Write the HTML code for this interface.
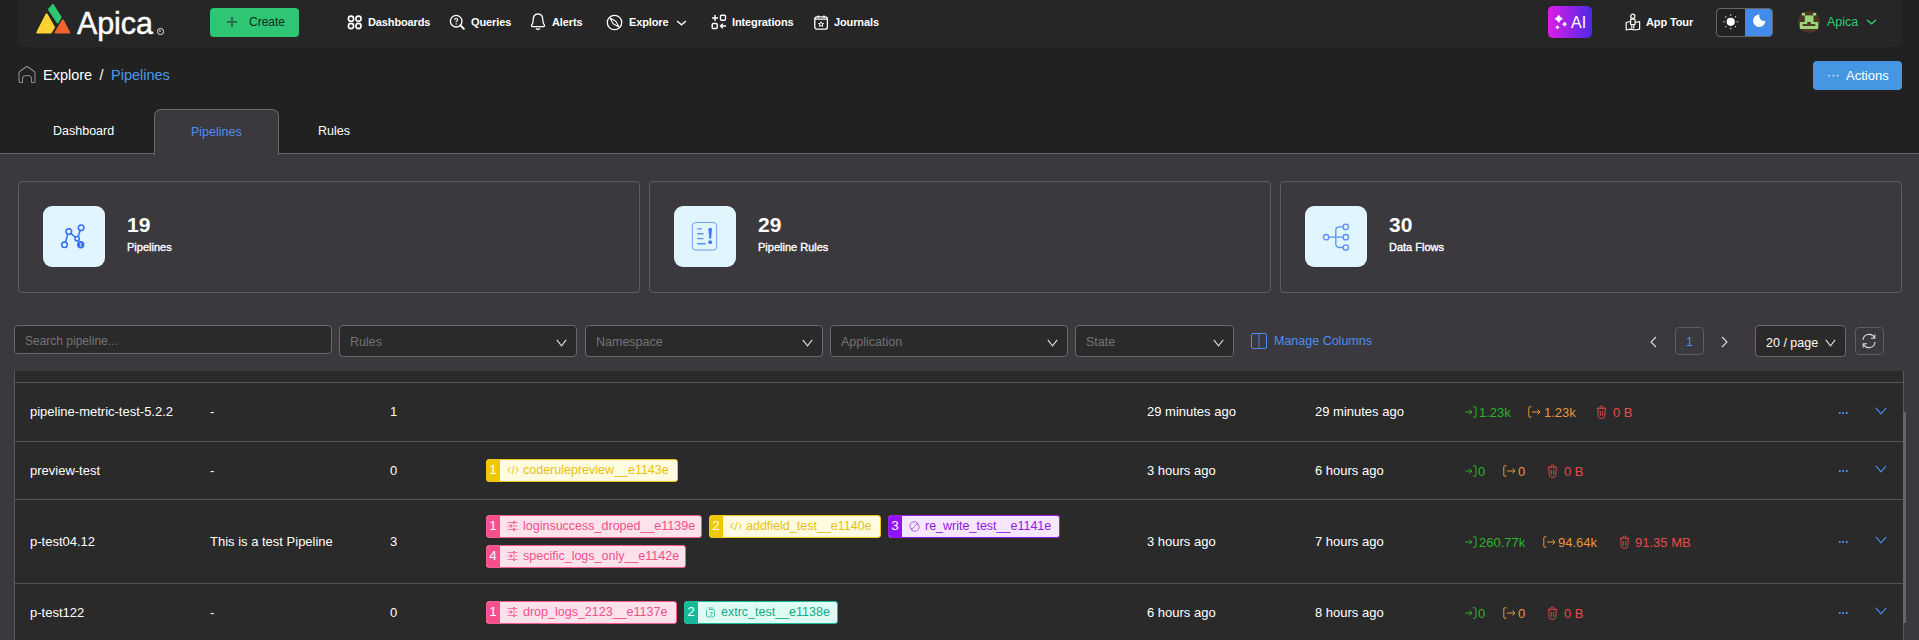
<!DOCTYPE html>
<html><head><meta charset="utf-8">
<style>
*{box-sizing:border-box;margin:0;padding:0}
html,body{width:1919px;height:640px;overflow:hidden;background:#212121;font-family:"Liberation Sans",sans-serif;color:#fff}
.a{position:absolute;white-space:nowrap}
.nav{position:absolute;left:18px;top:0;width:1884px;height:47px;background:#262626;border-radius:0 0 8px 8px}
.nt{position:absolute;top:17px;font-size:11px;font-weight:bold;line-height:11px;color:#fff;letter-spacing:-0.12px}
.content{position:absolute;left:0;top:153px;width:1919px;height:487px;background:#3b393e;border-top:1px solid #666}
.card{position:absolute;top:181px;height:112px;width:622px;border:1px solid #5e5c61;border-radius:4px;background:#3b393e}
.ibox{position:absolute;left:24px;top:24px;width:62px;height:61px;background:#e0f5fe;border-radius:9px}
.cnum{position:absolute;left:108px;top:213.5px;font-size:21px;font-weight:bold;line-height:21px}
.clab{position:absolute;left:108px;top:241.7px;font-size:11px;font-weight:normal;line-height:11px;-webkit-text-stroke:0.35px #fff}
.sel{position:absolute;top:325px;height:32px;border:1px solid #6a686d;border-radius:4px;background:#2a2a2a}
.ph{position:absolute;left:10px;top:9.5px;font-size:12.5px;line-height:13px;color:#737377}
.chev{position:absolute;right:9px;top:12.5px}
.table{position:absolute;left:14px;top:371px;width:1890px;height:269px;background:#2a2a2a;border-left:1px solid #5a5a5a;border-right:1px solid #5a5a5a}
.hl{position:absolute;left:15px;width:1888px;height:1px;background:#555}
.td{position:absolute;font-size:13px;line-height:13px;color:#fff}
.tag{position:absolute;height:23px;border:1px solid;border-radius:3px;overflow:hidden}
.tag .n{position:absolute;left:-1px;top:-1px;bottom:-1px;width:14px;color:#fff;font-size:13.5px;line-height:21.5px;text-align:center}
.tag .t{position:absolute;left:36px;top:4.3px;font-size:12.5px;line-height:13px}
.tag svg{position:absolute;left:20px;top:6px;opacity:0.75}
.pink{background:#fde1eb;border-color:#f55b92}
.pink .n{background:#f74f8c}
.pink .t{color:#f0508a}
.yel{background:#fffbe1;border-color:#f1c40f}
.yel .n{background:#f0c800}
.yel .t{color:#e6c20e}
.pur{background:#f6e6fe;border-color:#9b1fe8}
.pur .n{background:#9013fe}
.pur .t{color:#8e1be0}
.teal{background:#dffcf4;border-color:#1abc9c}
.teal .n{background:#17b897}
.teal .t{color:#13a889}
.m{position:absolute;font-size:13px;line-height:13px;margin-top:0.5px}
.g{color:#2bb52b}.o{color:#e8973c}.r{color:#e84a4a}
</style></head><body>

<!-- NAV -->
<div class="nav"></div>
<svg class="a" style="left:35px;top:3px" width="37" height="32" viewBox="0 0 37 32" stroke-linejoin="round" stroke-width="2">
  <path d="M18 2 L25.6 14.3 L22.6 19.5 L14 6.5 Z" fill="#2dc772" stroke="#2dc772"/>
  <path d="M11.6 11.3 L19 24.3 L15.6 29.6 L2.2 29.6 Z" fill="#fdd034" stroke="#fdd034"/>
  <path d="M27.8 17.3 L34.2 29.6 L20.6 29.6 Z" fill="#f0642c" stroke="#f0642c"/>
</svg>
<div class="a" style="left:77px;top:8px;font-size:30.5px;line-height:30px;color:#fff;letter-spacing:-0.1px;-webkit-text-stroke:0.45px #fff">Apica</div>
<div class="a" style="left:157px;top:28px;width:6.5px;height:6.5px;border:1.3px solid #e8e8e8;border-radius:50%"></div><div class="a" style="left:159.2px;top:30.2px;width:2.2px;height:2.2px;background:#bbb;border-radius:50%"></div>

<div class="a" style="left:210px;top:8px;width:89px;height:29px;background:#2ec574;border-radius:4px"></div>
<div class="a" style="left:227px;top:21.2px;width:10px;height:1.5px;background:#2a6e47"></div>
<div class="a" style="left:231.3px;top:17px;width:1.5px;height:10px;background:#2a6e47"></div>
<div class="a" style="left:249px;top:16px;font-size:12px;line-height:12px;color:#16281f">Create</div>

<svg class="a" style="left:347px;top:15px" width="16" height="15" viewBox="0 0 16 15" fill="none" stroke="#fff" stroke-width="1.6">
  <circle cx="4" cy="3.7" r="2.6"/><circle cx="11.5" cy="3.7" r="2.6"/><circle cx="4" cy="11" r="2.6"/><circle cx="11.5" cy="11" r="2.6"/>
</svg>
<div class="nt" style="left:368px">Dashboards</div>

<svg class="a" style="left:449px;top:14px" width="17" height="17" viewBox="0 0 17 17" fill="none" stroke="#fff" stroke-width="1.3"><circle cx="7.2" cy="7.2" r="5.8"/><path d="M11.4 11.4 L14.8 14.8" stroke-width="2" stroke-linecap="round"/><path d="M5.7 5.9 Q5.7 4.3 7.2 4.3 Q8.7 4.3 8.7 5.7 Q8.7 6.7 7.2 7.2 L7.2 8.2" stroke-width="1.1"/><circle cx="7.2" cy="9.9" r="0.7" fill="#fff" stroke="none"/></svg>
<div class="nt" style="left:471px">Queries</div>

<svg class="a" style="left:530px;top:13px" width="16" height="18" viewBox="0 0 16 18" fill="none" stroke="#fff" stroke-width="1.3"><path d="M3 13.7 Q1.2 13.7 1.6 12 Q3.2 10.2 3.2 7 Q3.2 1 8 1 Q12.8 1 12.8 7 Q12.8 10.2 14.4 12 Q14.8 13.7 13 13.7 Z" stroke-linejoin="round"/><path d="M6 15.6 Q8 17.2 10 15.6"/></svg>
<div class="nt" style="left:552px">Alerts</div>

<svg class="a" style="left:606px;top:13.5px" width="17" height="17" viewBox="0 0 17 17" fill="none" stroke="#fff" stroke-width="1.3"><circle cx="8.5" cy="8.5" r="7.2"/><path d="M4 4 L9.8 7.2 L13 13 L7.2 9.8 Z" stroke-width="1.1" stroke-linejoin="round"/></svg>
<div class="nt" style="left:629px">Explore</div>
<svg class="a" style="left:676px;top:19.5px" width="11" height="6" viewBox="0 0 11 6" fill="none" stroke="#fff" stroke-width="1.4"><path d="M1 1 L5.5 4.8 L10 1"/></svg>

<svg class="a" style="left:711px;top:14px" width="16" height="16" viewBox="0 0 16 16" fill="none" stroke="#fff" stroke-width="1.4">
  <path d="M4 1 L4 7 M1 4 L7 4"/><rect x="9.5" y="1.2" width="5" height="5" rx="1"/><rect x="1.2" y="9.5" width="5" height="5" rx="1"/><path d="M15 12 L9.5 12 M11.8 9.7 L9.5 12 L11.8 14.3"/>
</svg>
<div class="nt" style="left:732px">Integrations</div>

<svg class="a" style="left:814px;top:15px" width="15" height="15" viewBox="0 0 15 15" fill="none" stroke="#fff" stroke-width="1.3"><rect x="0.8" y="1.8" width="12.6" height="12.4" rx="2.2"/><path d="M4.2 0.5 L4.2 3 M10 0.5 L10 3 M0.8 4.2 L13.4 4.2"/><path d="M7.1 6.8 L7.9 8.4 L9.6 8.6 L8.3 9.7 L8.7 11.4 L7.1 10.5 L5.5 11.4 L5.9 9.7 L4.6 8.6 L6.3 8.4 Z" stroke-width="1"/></svg>
<div class="nt" style="left:834px">Journals</div>

<!-- right nav -->
<div class="a" style="left:1548px;top:6px;width:44px;height:31.5px;border-radius:5px;background:linear-gradient(90deg,#e01de6,#4b2ae6)"></div>
<svg class="a" style="left:1553px;top:12px" width="14" height="18" viewBox="0 0 14 18" fill="#fff"><path d="M5.75 2.45 Q6.954 5.546 10.05 6.75 Q6.954 7.954 5.75 11.05 Q4.546 7.954 1.4500000000000002 6.75 Q4.546 5.546 5.75 2.45 Z"/><path d="M11.6 9.6 Q12.328 11.472 14.2 12.2 Q12.328 12.927999999999999 11.6 14.799999999999999 Q10.872 12.927999999999999 9.0 12.2 Q10.872 11.472 11.6 9.6 Z"/><path d="M4.5 12.899999999999999 Q5.144 14.556 6.8 15.2 Q5.144 15.844 4.5 17.5 Q3.856 15.844 2.2 15.2 Q3.856 14.556 4.5 12.899999999999999 Z"/></svg>
<div class="a" style="left:1571px;top:14.5px;font-size:16px;line-height:16px;color:#fff">AI</div>

<svg class="a" style="left:1625px;top:13px" width="16" height="18" viewBox="0 0 16 18" fill="none" stroke="#fff" stroke-width="1.2" stroke-linejoin="round"><circle cx="7.8" cy="3.3" r="2.1"/><path d="M5.6 6.2 L10 6.2 L10 11.5 L5.6 11.5 Z"/><path d="M6.8 11.5 L6.8 15.5 M8.8 11.5 L8.8 15.5"/><path d="M5 8.5 L1.2 9.5 L1.2 17 L5.2 16.2 L10.4 17 L14.6 16.2 L14.6 8.5 L10.6 9.3"/></svg>
<div class="nt" style="left:1646px">App Tour</div>

<div class="a" style="left:1716px;top:8px;width:57px;height:29px;border:1px solid #666;border-radius:4px;background:#222;overflow:hidden">
  <div class="a" style="left:28px;top:0;width:28px;height:27px;background:#438aea"></div>
</div>
<svg class="a" style="left:1722px;top:13px" width="18" height="18" viewBox="0 0 18 18" fill="#fff" stroke="#fff"><circle cx="8.7" cy="8.8" r="4.1" stroke="none"/><g stroke-width="1.1" stroke-linecap="butt" opacity="0.85"><path d="M8.7 1.3 L8.7 2.8 M8.7 14.8 L8.7 16.3 M1.2 8.8 L2.7 8.8 M14.7 8.8 L16.2 8.8 M3.4 3.5 L4.3 4.4 M13.1 13.2 L14 14.1 M3.4 14.1 L4.3 13.2 M13.1 4.4 L14 3.5"/></g></svg>
<svg class="a" style="left:1752px;top:14px" width="15" height="14" viewBox="0 0 15 14"><path d="M7.50 0.61 A6.2 6.2 0 1 0 13.40 6.88 A5.0 5.0 0 0 1 7.50 0.61 Z" fill="#fff"/></svg>


<svg class="a" style="left:1798px;top:11px" width="22" height="22" viewBox="0 0 22 22"><circle cx="11" cy="11" r="11" fill="#4a3526"/><g fill="#9dd67a"><rect x="3.8" y="1.9" width="3.2" height="2.6"/><rect x="15" y="1.9" width="3.2" height="2.6"/><rect x="6.8" y="4.4" width="8.7" height="6.8"/><rect x="1.8" y="11" width="18.4" height="7"/></g><rect x="4.6" y="13.1" width="12.8" height="1.9" fill="#4a3526"/><rect x="9.2" y="11" width="3.6" height="2.1" fill="#4a3526"/></svg>
<div class="a" style="left:1827px;top:16px;font-size:12.5px;line-height:13px;color:#2ecc71">Apica</div>
<svg class="a" style="left:1866px;top:19px" width="11" height="6" viewBox="0 0 11 6" fill="none" stroke="#2ecc71" stroke-width="1.4"><path d="M1 1 L5.5 4.8 L10 1"/></svg>

<!-- breadcrumb -->
<svg class="a" style="left:18px;top:66px" width="18" height="18" viewBox="0 0 18 18" fill="none" stroke="#8a8a8a" stroke-width="1.1">
  <path d="M4.5 16.5 L2 16.5 Q1 16.5 1 15.5 L1 7 Q1 6 2 5.3 L8 1 Q9 0.3 10 1 L16 5.3 Q17 6 17 7 L17 15.5 Q17 16.5 16 16.5 L13.5 16.5 L13.5 12.5 Q13.5 9.5 9 9.5 Q4.5 9.5 4.5 12.5 Z" stroke-linejoin="round"/>
</svg>
<div class="a" style="left:43px;top:67.5px;font-size:14.5px;line-height:15px;color:#fff">Explore</div>
<div class="a" style="left:99.5px;top:67.5px;font-size:14.5px;line-height:15px;color:#fff">/</div>
<div class="a" style="left:111px;top:67.5px;font-size:14.5px;line-height:15px;color:#4a9ae8">Pipelines</div>

<div class="a" style="left:1813px;top:61px;width:89px;height:29px;background:#4597e3;border-radius:4px"></div>
<div class="a" style="left:1827px;top:69px;font-size:12px;line-height:12px;color:#fff;letter-spacing:0.2px">···</div>
<div class="a" style="left:1846px;top:69px;font-size:13px;line-height:13px;color:#fff">Actions</div>

<!-- tabs -->
<div class="a" style="left:53px;top:124.6px;font-size:12.5px;line-height:13px;color:#fff">Dashboard</div>
<div class="a" style="left:318px;top:124.6px;font-size:12.5px;line-height:13px;color:#fff">Rules</div>

<!-- content -->
<div class="content"></div>
<div class="a" style="left:154px;top:109px;width:125px;height:46px;background:#3b393e;border:1px solid #6b696e;border-bottom:none;border-radius:7px 7px 0 0"></div>
<div class="a" style="left:191px;top:126px;font-size:12.5px;line-height:13px;color:#4a8ff0">Pipelines</div>

<!-- cards -->
<div class="card" style="left:18px"><div class="ibox"></div></div>
<div class="card" style="left:649px"><div class="ibox"></div></div>
<div class="card" style="left:1280px"><div class="ibox"></div></div>

<svg class="a" style="left:60px;top:223px" width="28" height="28" viewBox="0 0 28 28" fill="none" stroke="#2f6ef5" stroke-width="1.5">
  <circle cx="21.1" cy="4.8" r="2.8"/><circle cx="8.8" cy="8.5" r="2.8"/><circle cx="17.1" cy="15.8" r="2.2"/><circle cx="4.5" cy="21.8" r="2.8"/>
  <path d="M5.5 19.2 L7.8 11.1 M10.8 10.4 L15.4 14.3 M20.2 7.5 L18.1 13.6"/>
  <circle cx="20.7" cy="21.8" r="3.7" fill="#2f6ef5" stroke="none"/><path d="M21.8 20.6 L19.8 20.6 L21.2 21.8 L19.8 23 L21.8 23" stroke="#e0f5fe" stroke-width="0.7"/>
</svg>
<div class="cnum" style="left:127px">19</div>
<div class="clab" style="left:127px">Pipelines</div>

<svg class="a" style="left:691px;top:222px" width="28" height="30" viewBox="0 0 28 30" fill="none">
  <rect x="1.3" y="0.5" width="24.4" height="27.6" rx="3.5" stroke="#6d9df7" stroke-width="1"/>
  <path d="M6.2 6.9 L10.8 6.9 M6.2 11.8 L12.6 11.8 M6.2 16.6 L12.6 16.6 M6.2 21.7 L14.6 21.7" stroke="#5c8ff6" stroke-width="1.4"/>
  <path d="M17.4 7.3 Q17.4 5.8 19.2 5.8 Q21 5.8 21 7.3 L20.1 16.8 L18.3 16.8 Z" fill="#3f7cf5"/>
  <circle cx="19.2" cy="20.2" r="1.9" fill="#3f7cf5"/>
</svg>
<div class="cnum" style="left:758px">29</div>
<div class="clab" style="left:758px">Pipeline Rules</div>

<svg class="a" style="left:1322px;top:223px" width="28" height="28" viewBox="0 0 28 28" fill="none" stroke="#5a8ef5" stroke-width="1.3">
  <circle cx="4.1" cy="14.2" r="2.7"/><circle cx="23.8" cy="3.9" r="2.7"/><circle cx="23.8" cy="14.2" r="2.7"/><circle cx="23.8" cy="24.5" r="2.7"/>
  <path d="M6.8 14.2 L21.1 14.2 M21.1 3.9 L17.5 3.9 Q13.8 3.9 13.8 7.6 L13.8 20.8 Q13.8 24.5 17.5 24.5 L21.1 24.5"/>
</svg>
<div class="cnum" style="left:1389px">30</div>
<div class="clab" style="left:1389px">Data Flows</div>

<!-- filters -->
<div class="sel" style="left:14px;width:318px;height:29px"><div class="ph" style="top:8.5px;font-size:12px">Search pipeline...</div></div>
<div class="sel" style="left:339px;width:238px"><div class="ph">Rules</div><svg class="chev" width="11" height="8" viewBox="0 0 11 8" fill="none" stroke="#e0e0e0" stroke-width="1.1"><path d="M0.8 0.8 L5.5 6.8 L10.2 0.8"/></svg></div>
<div class="sel" style="left:585px;width:238px"><div class="ph">Namespace</div><svg class="chev" width="11" height="8" viewBox="0 0 11 8" fill="none" stroke="#e0e0e0" stroke-width="1.1"><path d="M0.8 0.8 L5.5 6.8 L10.2 0.8"/></svg></div>
<div class="sel" style="left:830px;width:238px"><div class="ph">Application</div><svg class="chev" width="11" height="8" viewBox="0 0 11 8" fill="none" stroke="#e0e0e0" stroke-width="1.1"><path d="M0.8 0.8 L5.5 6.8 L10.2 0.8"/></svg></div>
<div class="sel" style="left:1075px;width:159px"><div class="ph">State</div><svg class="chev" width="11" height="8" viewBox="0 0 11 8" fill="none" stroke="#e0e0e0" stroke-width="1.1"><path d="M0.8 0.8 L5.5 6.8 L10.2 0.8"/></svg></div>

<svg class="a" style="left:1251px;top:333px" width="16" height="16" viewBox="0 0 16 16" fill="none" stroke="#4a8ff0" stroke-width="1"><rect x="0.5" y="0.5" width="15" height="15" rx="1.5"/><path d="M8 1 L8 15" stroke="#4670b8" stroke-width="1.3"/></svg>
<div class="a" style="left:1274px;top:335px;font-size:12.5px;line-height:13px;color:#4a8ff0">Manage Columns</div>

<svg class="a" style="left:1649px;top:335.5px" width="9" height="12" viewBox="0 0 9 12" fill="none" stroke="#ddd" stroke-width="1.1"><path d="M7 1 L2 6 L7 11"/></svg>
<div class="a" style="left:1675px;top:327px;width:29px;height:28px;border:1px solid #5f5d62;border-radius:4px"></div>
<div class="a" style="left:1686px;top:336px;font-size:12.5px;line-height:13px;color:#4a8ff0">1</div>
<svg class="a" style="left:1720px;top:335.5px" width="9" height="12" viewBox="0 0 9 12" fill="none" stroke="#ddd" stroke-width="1.1"><path d="M2 1 L7 6 L2 11"/></svg>
<div class="sel" style="left:1755px;width:91px"><div class="ph" style="color:#fff;top:10.5px">20 / page</div><svg class="chev" width="11" height="8" viewBox="0 0 11 8" fill="none" stroke="#e0e0e0" stroke-width="1.1" style="right:9px"><path d="M0.8 0.8 L5.5 6.8 L10.2 0.8"/></svg></div>
<div class="a" style="left:1855px;top:327px;width:29px;height:28px;border:1px solid #5f5d62;border-radius:4px"></div>
<svg class="a" style="left:1860px;top:332px" width="18" height="18" viewBox="0 0 18 18" fill="none" stroke="#e0e0e0" stroke-width="1.1"><path d="M3 8 A6 6 0 0 1 14.5 6 M15 10 A6 6 0 0 1 3.5 12"/><path d="M14.8 2.5 L14.8 6.3 L11 6.3 M3.2 15.5 L3.2 11.7 L7 11.7"/></svg>

<!-- table -->
<div class="table"></div>
<div class="hl" style="top:382px"></div>
<div class="hl" style="top:441px"></div>
<div class="hl" style="top:499px"></div>
<div class="hl" style="top:583px"></div>
<div class="a" style="left:1903px;top:412px;width:3px;height:211px;background:#666"></div>

<!-- rows -->
<div class="td" style="left:30px;top:405px">pipeline-metric-test-5.2.2</div>
<div class="td" style="left:210px;top:405px">-</div>
<div class="td" style="left:390px;top:405px">1</div>
<div class="td" style="left:1147px;top:405px">29 minutes ago</div>
<div class="td" style="left:1315px;top:405px">29 minutes ago</div>

<div class="td" style="left:30px;top:464px">preview-test</div>
<div class="td" style="left:210px;top:464px">-</div>
<div class="td" style="left:390px;top:464px">0</div>
<div class="td" style="left:1147px;top:464px">3 hours ago</div>
<div class="td" style="left:1315px;top:464px">6 hours ago</div>

<div class="td" style="left:30px;top:535px">p-test04.12</div>
<div class="td" style="left:210px;top:535px">This is a test Pipeline</div>
<div class="td" style="left:390px;top:535px">3</div>
<div class="td" style="left:1147px;top:535px">3 hours ago</div>
<div class="td" style="left:1315px;top:535px">7 hours ago</div>

<div class="td" style="left:30px;top:606px">p-test122</div>
<div class="td" style="left:210px;top:606px">-</div>
<div class="td" style="left:390px;top:606px">0</div>
<div class="td" style="left:1147px;top:606px">6 hours ago</div>
<div class="td" style="left:1315px;top:606px">8 hours ago</div>

<!-- tags -->
<div class="tag yel" style="left:486px;top:459px;width:192px"><div class="n">1</div><svg width="12" height="10" viewBox="0 0 12 10" fill="none" stroke="#e6c20e" stroke-width="1.1" style="left:20px;top:5px"><path d="M3.3 2 L0.8 5 L3.3 8 M8.7 2 L11.2 5 L8.7 8 M7 1 L5 9"/></svg><div class="t">coderulepreview__e1143e</div></div>
<div class="tag pink" style="left:486px;top:515px;width:216px"><div class="n">1</div><svg width="11" height="10" viewBox="0 0 11 10" fill="none" stroke="#f0508a" stroke-width="1.1" style="left:20px;top:5px"><path d="M0.5 1.5 L10.5 1.5 M0.5 5 L10.5 5 M0.5 8.5 L10.5 8.5"/><rect x="6" y="0" width="2" height="3" fill="#f0508a" stroke="none"/><rect x="3" y="3.5" width="2" height="3" fill="#f0508a" stroke="none"/><rect x="6" y="7" width="2" height="3" fill="#f0508a" stroke="none"/></svg><div class="t">loginsuccess_droped__e1139e</div></div>
<div class="tag yel" style="left:709px;top:515px;width:172px"><div class="n">2</div><svg width="12" height="10" viewBox="0 0 12 10" fill="none" stroke="#e6c20e" stroke-width="1.1" style="left:20px;top:5px"><path d="M3.3 2 L0.8 5 L3.3 8 M8.7 2 L11.2 5 L8.7 8 M7 1 L5 9"/></svg><div class="t">addfield_test__e1140e</div></div>
<div class="tag pur" style="left:888px;top:515px;width:172px"><div class="n">3</div><svg width="11" height="11" viewBox="0 0 11 11" fill="none" stroke="#9b35e6" stroke-width="1" style="left:20px;top:4.5px"><path d="M2 8 A4.3 4.3 0 0 1 8.5 2.2 M9 3 A4.3 4.3 0 0 1 2.5 8.8"/><path d="M3 8 L8 3"/><path d="M7 1.5 L8.8 2 L8.5 3.8 M4 9.5 L2.2 9 L2.5 7.2"/></svg><div class="t">re_write_test__e1141e</div></div>
<div class="tag pink" style="left:486px;top:545px;width:200px"><div class="n">4</div><svg width="11" height="10" viewBox="0 0 11 10" fill="none" stroke="#f0508a" stroke-width="1.1" style="left:20px;top:5px"><path d="M0.5 1.5 L10.5 1.5 M0.5 5 L10.5 5 M0.5 8.5 L10.5 8.5"/><rect x="6" y="0" width="2" height="3" fill="#f0508a" stroke="none"/><rect x="3" y="3.5" width="2" height="3" fill="#f0508a" stroke="none"/><rect x="6" y="7" width="2" height="3" fill="#f0508a" stroke="none"/></svg><div class="t">specific_logs_only__e1142e</div></div>
<div class="tag pink" style="left:486px;top:601px;width:191px"><div class="n">1</div><svg width="11" height="10" viewBox="0 0 11 10" fill="none" stroke="#f0508a" stroke-width="1.1" style="left:20px;top:5px"><path d="M0.5 1.5 L10.5 1.5 M0.5 5 L10.5 5 M0.5 8.5 L10.5 8.5"/><rect x="6" y="0" width="2" height="3" fill="#f0508a" stroke="none"/><rect x="3" y="3.5" width="2" height="3" fill="#f0508a" stroke="none"/><rect x="6" y="7" width="2" height="3" fill="#f0508a" stroke="none"/></svg><div class="t">drop_logs_2123__e1137e</div></div>
<div class="tag teal" style="left:684px;top:601px;width:154px"><div class="n">2</div><svg width="11" height="11" viewBox="0 0 11 11" fill="none" stroke="#19b393" stroke-width="1" style="left:20px;top:4.5px"><path d="M1.5 3 L1.5 8.5 Q1.5 10 3 10 L8 10 Q9.5 10 9.5 8.5 L9.5 4 Q9.5 2.5 8 2.5 L4 2.5"/><path d="M3 1 L8 1" /><path d="M4.5 5.5 L7.5 5.5 L5.5 9"/></svg><div class="t">extrc_test__e1138e</div></div>
<!-- metrics -->
<svg class="a" style="left:1465px;top:406px" width="12" height="12" viewBox="0 0 12 12" fill="none" stroke="#2bb52b" stroke-width="1"><path d="M0.5 6 L6.8 6 M4.3 3.5 L6.8 6 L4.3 8.5"/><path d="M8 0.8 L10 0.8 Q11 0.8 11 1.8 L11 10.2 Q11 11.2 10 11.2 L8 11.2"/></svg><div class="m g" style="left:1479px;top:405px">1.23k</div><svg class="a" style="left:1528px;top:406px" width="13" height="12" viewBox="0 0 13 12" fill="none" stroke="#e8973c" stroke-width="1"><path d="M3.5 0.8 L1.8 0.8 Q0.8 0.8 0.8 1.8 L0.8 10.2 Q0.8 11.2 1.8 11.2 L3.5 11.2"/><path d="M4 6 L12 6 M9.5 3.5 L12 6 L9.5 8.5"/></svg><div class="m o" style="left:1544px;top:405px">1.23k</div><svg class="a" style="left:1596px;top:405px" width="11" height="14" viewBox="0 0 11 14" fill="none" stroke="#d94848" stroke-width="1"><path d="M0.8 3.3 L10.2 3.3 M3.6 3.3 Q3.6 1 5.5 1 Q7.4 1 7.4 3.3"/><path d="M1.8 3.6 Q1.8 12.6 3.4 13.2 L7.6 13.2 Q9.2 12.6 9.2 3.6"/><path d="M4.2 5.8 L4.4 10.8 M6.8 5.8 L6.6 10.8"/></svg><div class="m r" style="left:1613px;top:405px">0 B</div>
<svg class="a" style="left:1465px;top:465px" width="12" height="12" viewBox="0 0 12 12" fill="none" stroke="#2bb52b" stroke-width="1"><path d="M0.5 6 L6.8 6 M4.3 3.5 L6.8 6 L4.3 8.5"/><path d="M8 0.8 L10 0.8 Q11 0.8 11 1.8 L11 10.2 Q11 11.2 10 11.2 L8 11.2"/></svg><div class="m g" style="left:1478px;top:464px">0</div><svg class="a" style="left:1503px;top:465px" width="13" height="12" viewBox="0 0 13 12" fill="none" stroke="#e8973c" stroke-width="1"><path d="M3.5 0.8 L1.8 0.8 Q0.8 0.8 0.8 1.8 L0.8 10.2 Q0.8 11.2 1.8 11.2 L3.5 11.2"/><path d="M4 6 L12 6 M9.5 3.5 L12 6 L9.5 8.5"/></svg><div class="m o" style="left:1518px;top:464px">0</div><svg class="a" style="left:1547px;top:464px" width="11" height="14" viewBox="0 0 11 14" fill="none" stroke="#d94848" stroke-width="1"><path d="M0.8 3.3 L10.2 3.3 M3.6 3.3 Q3.6 1 5.5 1 Q7.4 1 7.4 3.3"/><path d="M1.8 3.6 Q1.8 12.6 3.4 13.2 L7.6 13.2 Q9.2 12.6 9.2 3.6"/><path d="M4.2 5.8 L4.4 10.8 M6.8 5.8 L6.6 10.8"/></svg><div class="m r" style="left:1564px;top:464px">0 B</div>
<svg class="a" style="left:1465px;top:536px" width="12" height="12" viewBox="0 0 12 12" fill="none" stroke="#2bb52b" stroke-width="1"><path d="M0.5 6 L6.8 6 M4.3 3.5 L6.8 6 L4.3 8.5"/><path d="M8 0.8 L10 0.8 Q11 0.8 11 1.8 L11 10.2 Q11 11.2 10 11.2 L8 11.2"/></svg><div class="m g" style="left:1479px;top:535px">260.77k</div><svg class="a" style="left:1543px;top:536px" width="13" height="12" viewBox="0 0 13 12" fill="none" stroke="#e8973c" stroke-width="1"><path d="M3.5 0.8 L1.8 0.8 Q0.8 0.8 0.8 1.8 L0.8 10.2 Q0.8 11.2 1.8 11.2 L3.5 11.2"/><path d="M4 6 L12 6 M9.5 3.5 L12 6 L9.5 8.5"/></svg><div class="m o" style="left:1558px;top:535px">94.64k</div><svg class="a" style="left:1619px;top:535px" width="11" height="14" viewBox="0 0 11 14" fill="none" stroke="#d94848" stroke-width="1"><path d="M0.8 3.3 L10.2 3.3 M3.6 3.3 Q3.6 1 5.5 1 Q7.4 1 7.4 3.3"/><path d="M1.8 3.6 Q1.8 12.6 3.4 13.2 L7.6 13.2 Q9.2 12.6 9.2 3.6"/><path d="M4.2 5.8 L4.4 10.8 M6.8 5.8 L6.6 10.8"/></svg><div class="m r" style="left:1635px;top:535px">91.35 MB</div>
<svg class="a" style="left:1465px;top:607px" width="12" height="12" viewBox="0 0 12 12" fill="none" stroke="#2bb52b" stroke-width="1"><path d="M0.5 6 L6.8 6 M4.3 3.5 L6.8 6 L4.3 8.5"/><path d="M8 0.8 L10 0.8 Q11 0.8 11 1.8 L11 10.2 Q11 11.2 10 11.2 L8 11.2"/></svg><div class="m g" style="left:1478px;top:606px">0</div><svg class="a" style="left:1503px;top:607px" width="13" height="12" viewBox="0 0 13 12" fill="none" stroke="#e8973c" stroke-width="1"><path d="M3.5 0.8 L1.8 0.8 Q0.8 0.8 0.8 1.8 L0.8 10.2 Q0.8 11.2 1.8 11.2 L3.5 11.2"/><path d="M4 6 L12 6 M9.5 3.5 L12 6 L9.5 8.5"/></svg><div class="m o" style="left:1518px;top:606px">0</div><svg class="a" style="left:1547px;top:606px" width="11" height="14" viewBox="0 0 11 14" fill="none" stroke="#d94848" stroke-width="1"><path d="M0.8 3.3 L10.2 3.3 M3.6 3.3 Q3.6 1 5.5 1 Q7.4 1 7.4 3.3"/><path d="M1.8 3.6 Q1.8 12.6 3.4 13.2 L7.6 13.2 Q9.2 12.6 9.2 3.6"/><path d="M4.2 5.8 L4.4 10.8 M6.8 5.8 L6.6 10.8"/></svg><div class="m r" style="left:1564px;top:606px">0 B</div>
<div class="a" style="left:1838px;top:412px;width:10px;height:2px;background:radial-gradient(circle,#4a8ff0 0.7px,transparent 1px) 0 0/3.5px 2px repeat-x"></div><svg class="a" style="left:1875px;top:407px" width="12" height="8" viewBox="0 0 12 8" fill="none" stroke="#4a8ff0" stroke-width="1.1"><path d="M0.8 0.8 L6 6.8 L11.2 0.8"/></svg>
<div class="a" style="left:1838px;top:470px;width:10px;height:2px;background:radial-gradient(circle,#4a8ff0 0.7px,transparent 1px) 0 0/3.5px 2px repeat-x"></div><svg class="a" style="left:1875px;top:465px" width="12" height="8" viewBox="0 0 12 8" fill="none" stroke="#4a8ff0" stroke-width="1.1"><path d="M0.8 0.8 L6 6.8 L11.2 0.8"/></svg>
<div class="a" style="left:1838px;top:541px;width:10px;height:2px;background:radial-gradient(circle,#4a8ff0 0.7px,transparent 1px) 0 0/3.5px 2px repeat-x"></div><svg class="a" style="left:1875px;top:536px" width="12" height="8" viewBox="0 0 12 8" fill="none" stroke="#4a8ff0" stroke-width="1.1"><path d="M0.8 0.8 L6 6.8 L11.2 0.8"/></svg>
<div class="a" style="left:1838px;top:612px;width:10px;height:2px;background:radial-gradient(circle,#4a8ff0 0.7px,transparent 1px) 0 0/3.5px 2px repeat-x"></div><svg class="a" style="left:1875px;top:607px" width="12" height="8" viewBox="0 0 12 8" fill="none" stroke="#4a8ff0" stroke-width="1.1"><path d="M0.8 0.8 L6 6.8 L11.2 0.8"/></svg>
</body></html>
